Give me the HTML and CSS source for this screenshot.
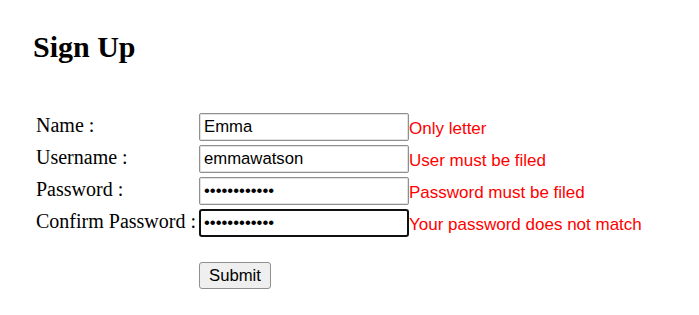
FILE: index.html
```html
<!DOCTYPE html>
<html lang="en">
<head>
    <meta charset="UTF-8">
    <title>Sign Up</title>
    <link rel="stylesheet" href="styles.css">
</head>
<body>
    <h2 class="title">Sign Up</h2>
    <form class="signup">
        <div class="row">
            <label for="name">Name :</label>
            <input type="text" id="name" value="Emma">
            <span class="error">Only letter</span>
        </div>
        <div class="row">
            <label for="username">Username :</label>
            <input type="text" id="username" value="emmawatson">
            <span class="error">User must be filed</span>
        </div>
        <div class="row">
            <label for="password">Password :</label>
            <input type="password" id="password" value="emmawatson12">
            <span class="error">Password must be filed</span>
        </div>
        <div class="row">
            <label for="confirm">Confirm Password :</label>
            <input type="password" id="confirm" class="focused" value="emmawatson12">
            <span class="error">Your password does not match</span>
        </div>
        <div class="row submit-row">
            <button type="button">Submit</button>
        </div>
    </form>
</body>
</html>
```

FILE: styles.css
```css
body {
    margin: 0;
    background: #fff;
    font-family: "Liberation Serif", "Times New Roman", serif;
    color: #000;
}
.title {
    margin: 30px 0 0 33px;
    font-size: 30px;
    line-height: 34px;
    font-weight: bold;
}
.signup {
    margin: 49px 0 0 36px;
    display: flex;
    flex-direction: column;
    gap: 4px;
}
.row {
    display: flex;
    align-items: baseline;
    height: 28px;
}
.row label {
    width: 163px;
    font-size: 20px;
}
.row input {
    box-sizing: border-box;
    width: 210px;
    height: 28px;
    margin: 0;
    padding: 0 4px;
    border: 1px solid #8f8f8f;
    border-radius: 2px;
    box-shadow: inset 0 0 0 1px #e2e2e2;
    font-family: "Liberation Sans", Arial, sans-serif;
    font-size: 16.7px;
    color: #000;
    outline: none;
}
.row input.focused {
    border: 2px solid #101010;
    border-radius: 3px;
    box-shadow: none;
    padding: 0 3px;
}
.error {
    align-self: flex-start;
    line-height: 32px;
    color: #ff0000;
    font-family: "Liberation Sans", Arial, sans-serif;
    font-size: 17px;
}
.submit-row {
    margin-top: 21px;
    padding-left: 163px;
    height: 27px;
}
.submit-row button {
    height: 27px;
    padding: 0 9px;
    background: #efefef;
    border: 1px solid #8f8f8f;
    border-radius: 3px;
    font-family: "Liberation Sans", Arial, sans-serif;
    font-size: 16.7px;
    color: #000;
}
```
